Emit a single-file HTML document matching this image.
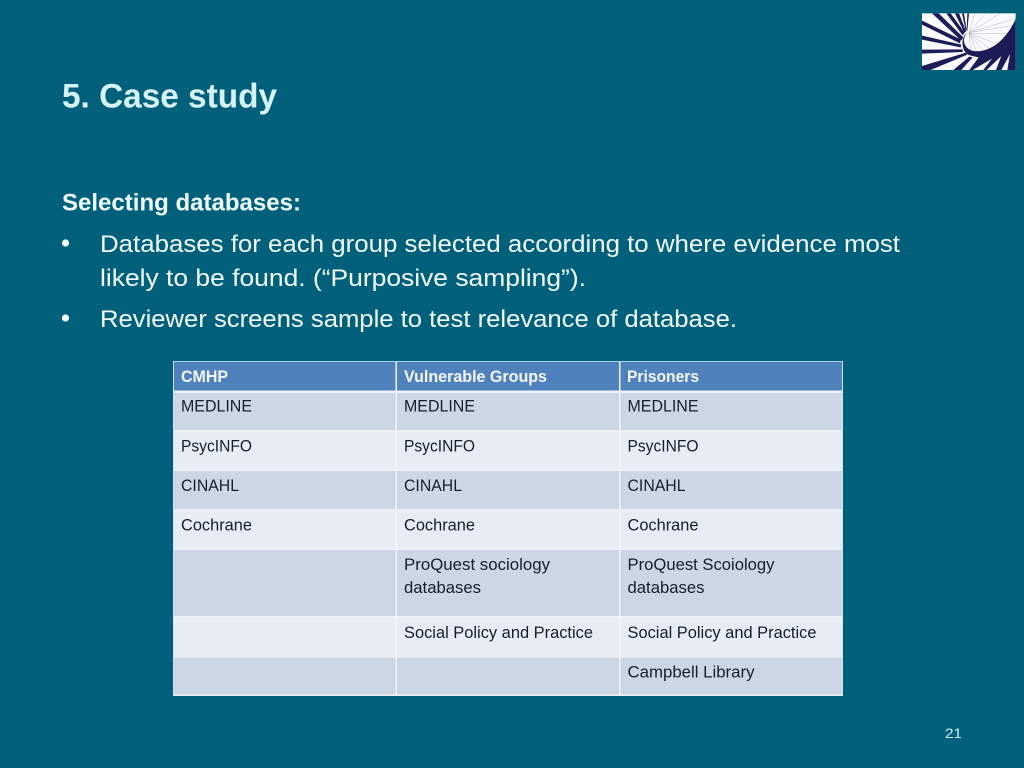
<!DOCTYPE html>
<html lang="en">
<head>
<meta charset="utf-8">
<title>5. Case study</title>
<style>
html,body{margin:0;padding:0;width:1024px;height:768px;overflow:hidden;background:#03607a}
svg{display:block}
text{font-family:"Liberation Sans",sans-serif}
.b{font-size:24px;fill:#f1fafc}
.t{font-size:16.5px;fill:#14202a}
.h{font-size:16.5px;font-weight:bold;fill:#f4f8fc}
</style>
</head>
<body>
<svg width="1024" height="768" viewBox="0 0 1024 768" xmlns="http://www.w3.org/2000/svg">
<defs><filter id="s" x="-5%" y="-5%" width="110%" height="110%"><feGaussianBlur stdDeviation="0.5"/></filter></defs>
<rect width="1024" height="768" fill="#03607a"/>

<text x="62" y="107.500" font-size="34" font-weight="bold" fill="#d6f3f8" textLength="215" lengthAdjust="spacingAndGlyphs">5. Case study</text>
<text x="62" y="210.500" font-size="24" font-weight="bold" fill="#eef9fb" textLength="239" lengthAdjust="spacingAndGlyphs">Selecting databases:</text>
<circle cx="65.500" cy="243" r="3.600" fill="#f1fafc"/>
<circle cx="65.500" cy="318" r="3.600" fill="#f1fafc"/>
<text class="b" x="100" y="252" textLength="800" lengthAdjust="spacingAndGlyphs">Databases for each group selected according to where evidence most</text>
<text class="b" x="100" y="286" textLength="486" lengthAdjust="spacingAndGlyphs">likely to be found. (“Purposive sampling”).</text>
<text class="b" x="100" y="327" textLength="637" lengthAdjust="spacingAndGlyphs">Reviewer screens sample to test relevance of database.</text>

<!-- table -->
<rect x="173" y="361" width="670" height="335" fill="#eef2f8"/>
<rect x="173" y="361" width="670" height="29.500" fill="#4f81bd"/>
<rect x="173" y="393" width="670" height="37" fill="#ccd6e5"/>
<rect x="173" y="431.500" width="670" height="38" fill="#e8ecf4"/>
<rect x="173" y="471" width="670" height="38" fill="#ccd6e5"/>
<rect x="173" y="510.500" width="670" height="38" fill="#e8ecf4"/>
<rect x="173" y="550" width="670" height="66" fill="#ccd6e5"/>
<rect x="173" y="617.500" width="670" height="38.500" fill="#e8ecf4"/>
<rect x="173" y="657.500" width="670" height="37" fill="#ccd6e5"/>
<rect x="395.500" y="361" width="1.500" height="335" fill="#f2f6fb"/>
<rect x="619" y="361" width="1.500" height="335" fill="#f2f6fb"/>
<rect x="173" y="361" width="670" height="1" fill="#a9d4ea"/>
<rect x="173" y="361" width="1" height="335" fill="#cfe6f0"/>
<rect x="842" y="361" width="1" height="335" fill="#cfe6f0"/>

<text class="h" x="181" y="382" textLength="47" lengthAdjust="spacingAndGlyphs">CMHP</text>
<text class="h" x="404" y="382" textLength="143" lengthAdjust="spacingAndGlyphs">Vulnerable Groups</text>
<text class="h" x="627" y="382" textLength="72" lengthAdjust="spacingAndGlyphs">Prisoners</text>

<text class="t" x="181" y="411.500" textLength="71" lengthAdjust="spacingAndGlyphs">MEDLINE</text>
<text class="t" x="404" y="411.500" textLength="71" lengthAdjust="spacingAndGlyphs">MEDLINE</text>
<text class="t" x="627.500" y="411.500" textLength="71" lengthAdjust="spacingAndGlyphs">MEDLINE</text>

<text class="t" x="181" y="451.500" textLength="71" lengthAdjust="spacingAndGlyphs">PsycINFO</text>
<text class="t" x="404" y="451.500" textLength="71" lengthAdjust="spacingAndGlyphs">PsycINFO</text>
<text class="t" x="627.500" y="451.500" textLength="71" lengthAdjust="spacingAndGlyphs">PsycINFO</text>

<text class="t" x="181" y="491" textLength="58" lengthAdjust="spacingAndGlyphs">CINAHL</text>
<text class="t" x="404" y="491" textLength="58" lengthAdjust="spacingAndGlyphs">CINAHL</text>
<text class="t" x="627.500" y="491" textLength="58" lengthAdjust="spacingAndGlyphs">CINAHL</text>

<text class="t" x="181" y="530.500" textLength="71" lengthAdjust="spacingAndGlyphs">Cochrane</text>
<text class="t" x="404" y="530.500" textLength="71" lengthAdjust="spacingAndGlyphs">Cochrane</text>
<text class="t" x="627.500" y="530.500" textLength="71" lengthAdjust="spacingAndGlyphs">Cochrane</text>

<text class="t" x="404" y="570" textLength="146" lengthAdjust="spacingAndGlyphs">ProQuest sociology</text>
<text class="t" x="404" y="593" textLength="77" lengthAdjust="spacingAndGlyphs">databases</text>
<text class="t" x="627.500" y="570" textLength="147" lengthAdjust="spacingAndGlyphs">ProQuest Scoiology</text>
<text class="t" x="627.500" y="593" textLength="77" lengthAdjust="spacingAndGlyphs">databases</text>

<text class="t" x="404" y="638" textLength="189" lengthAdjust="spacingAndGlyphs">Social Policy and Practice</text>
<text class="t" x="627.500" y="638" textLength="189" lengthAdjust="spacingAndGlyphs">Social Policy and Practice</text>

<text class="t" x="627.500" y="677.500" textLength="127" lengthAdjust="spacingAndGlyphs">Campbell Library</text>

<text x="945" y="738" font-size="14" fill="#cfe9ef" textLength="17" lengthAdjust="spacingAndGlyphs">21</text>

<!-- logo -->
<g transform="translate(904,0) scale(0.33333)" filter="url(#s)">
<rect x="54" y="40" width="281" height="170" fill="#fbfbfd"/>
<g stroke="#b4b4c0" stroke-width="1.500" fill="none">
<path d="M195 98L212 40M195 98L245 40M195 98L290 40M195 98L335 55M195 98L335 75M195 100L320 100M195 100L290 135M195 100L262 148M195 100L240 155M195 100L218 155M195 100L200 150"/>
</g>
<g fill="#1c1a56">
<path d="M84 40H104L178 112L172 122Z"/>
<path d="M127 40H140L182 98L176 106Z"/>
<path d="M153 40H165L186 94L181 98Z"/>
<path d="M174 40H180L188 92H185Z"/>
<path d="M190 40H195L190 92H188Z"/>
<path d="M54 62L170 118L168 130L54 74Z"/>
<path d="M54 107L172 134L170 142L54 119Z"/>
<path d="M54 149L176 148L176 156L54 161Z"/>
<path d="M54 198L186 158L190 164L80 210H54Z"/>
<path d="M148 210L196 170L206 172L172 210Z"/>
<path d="M190 98C176 112 176 134 194 147C216 162 262 152 294 118C312 100 326 78 335 56V210H310L318 162L292 210H276L292 168L248 210H238L264 176L206 210H196L224 172L205 168C186 164 178 152 176 136C174 118 180 104 190 98Z"/>
</g>
</g>
</svg>
</body>
</html>
